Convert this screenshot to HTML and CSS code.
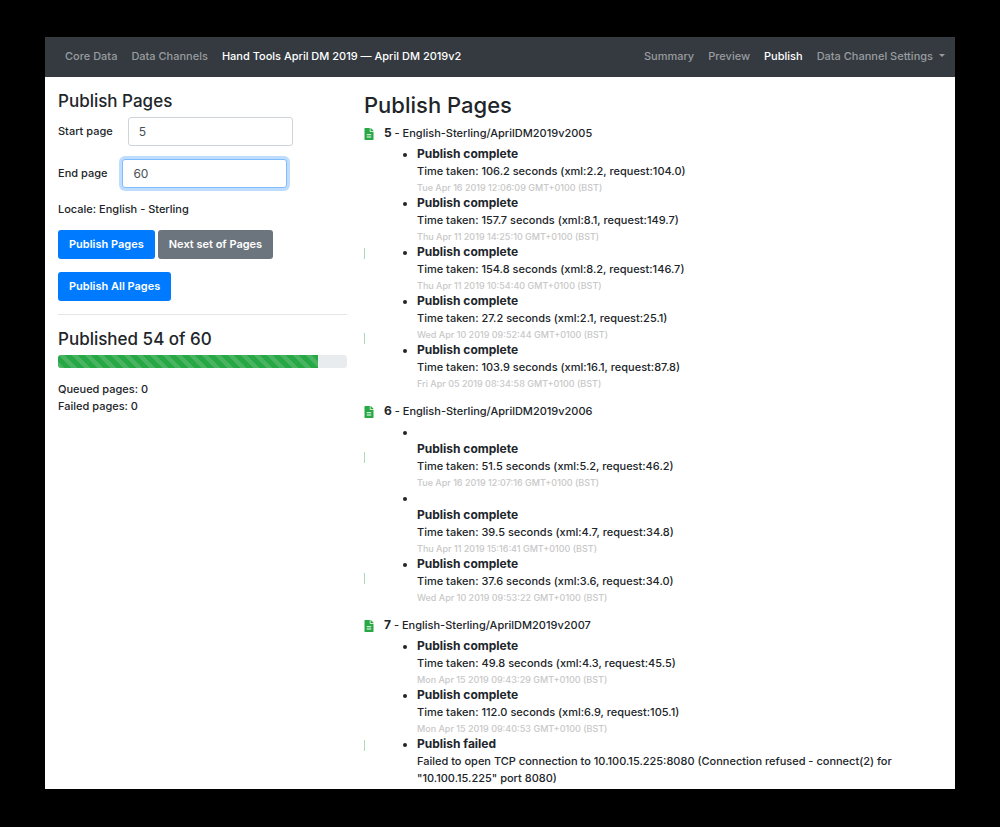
FILE: index.html
```html
<!DOCTYPE html>
<html lang="en">
<head>
  <meta charset="UTF-8" />
  <meta name="viewport" content="width=device-width, initial-scale=1" />
  <title>Publish Pages</title>
  <link rel="stylesheet" href="styles.css">
</head>
<body>
  <svg class="defs" width="0" height="0" aria-hidden="true">
    <symbol id="file" viewBox="0 0 384 512">
      <path fill="currentColor" d="M224 136V0H24C11 0 0 11 0 24v464c0 13 11 24 24 24h336c13 0 24-11 24-24V160H248c-13 0-24-11-24-24zm64 264H96v-40h192v40zm0-96H96v-40h192v40zM384 122v6H256V0h6c6 0 12 3 17 7l98 98c4 5 7 11 7 17z" />
    </symbol>
  </svg>

  <div class="app">
    <nav class="navbar">
      <a href="#">Core Data</a>
      <a href="#">Data Channels</a>
      <a href="#" class="active">Hand Tools April DM 2019 — April DM 2019v2</a>
      <div class="nav-right">
        <a href="#">Summary</a>
        <a href="#">Preview</a>
        <a href="#" class="active">Publish</a>
        <a href="#" class="dropdown">Data Channel Settings</a>
      </div>
    </nav>

    <main class="columns">
      <section class="sidebar">
        <h2>Publish Pages</h2>
        <form>
          <div class="field">
            <label for="start">Start page</label>
            <input type="text" id="start" value="5" />
          </div>
          <div class="field">
            <label for="end">End page</label>
            <input type="text" id="end" class="focused" value="60" />
          </div>
          <p class="locale">Locale: English - Sterling</p>
          <div class="buttons">
            <button type="button" class="btn">Publish Pages</button>
            <button type="button" class="btn secondary">Next set of Pages</button>
          </div>
          <div class="buttons">
            <button type="button" class="btn">Publish All Pages</button>
          </div>
        </form>
        <hr />
        <h2>Published 54 of 60</h2>
        <div class="progress"><div class="bar" style="width: 90%"></div></div>
        <div>Queued pages: 0</div>
        <div>Failed pages: 0</div>
      </section>

      <section class="log">
        <h1>Publish Pages</h1>

        <div class="page">
          <div class="page-title"><svg class="icon"><use href="#file" /></svg><span><b>5</b> - English-Sterling/AprilDM2019v2005</span></div>
          <ul>
            <li><b>Publish complete</b><div>Time taken: 106.2 seconds (xml:2.2, request:104.0)</div><small>Tue Apr 16 2019 12:06:09 GMT+0100 (BST)</small></li>
            <li><b>Publish complete</b><div>Time taken: 157.7 seconds (xml:8.1, request:149.7)</div><small>Thu Apr 11 2019 14:25:10 GMT+0100 (BST)</small></li>
            <li class="tick"><b>Publish complete</b><div>Time taken: 154.8 seconds (xml:8.2, request:146.7)</div><small>Thu Apr 11 2019 10:54:40 GMT+0100 (BST)</small></li>
            <li class="tick tick-low"><b>Publish complete</b><div>Time taken: 27.2 seconds (xml:2.1, request:25.1)</div><small>Wed Apr 10 2019 09:52:44 GMT+0100 (BST)</small></li>
            <li><b>Publish complete</b><div>Time taken: 103.9 seconds (xml:16.1, request:87.8)</div><small>Fri Apr 05 2019 08:34:58 GMT+0100 (BST)</small></li>
          </ul>
        </div>

        <div class="page">
          <div class="page-title"><svg class="icon"><use href="#file" /></svg><span><b>6</b> - English-Sterling/AprilDM2019v2006</span></div>
          <ul>
            <li class="tick tick-mid"><br /><b>Publish complete</b><div>Time taken: 51.5 seconds (xml:5.2, request:46.2)</div><small>Tue Apr 16 2019 12:07:16 GMT+0100 (BST)</small></li>
            <li><br /><b>Publish complete</b><div>Time taken: 39.5 seconds (xml:4.7, request:34.8)</div><small>Thu Apr 11 2019 15:16:41 GMT+0100 (BST)</small></li>
            <li class="tick tick-high"><b>Publish complete</b><div>Time taken: 37.6 seconds (xml:3.6, request:34.0)</div><small>Wed Apr 10 2019 09:53:22 GMT+0100 (BST)</small></li>
          </ul>
        </div>

        <div class="page">
          <div class="page-title"><svg class="icon"><use href="#file" /></svg><span><b>7</b> - English-Sterling/AprilDM2019v2007</span></div>
          <ul>
            <li><b>Publish complete</b><div>Time taken: 49.8 seconds (xml:4.3, request:45.5)</div><small>Mon Apr 15 2019 09:43:29 GMT+0100 (BST)</small></li>
            <li><b>Publish complete</b><div>Time taken: 112.0 seconds (xml:6.9, request:105.1)</div><small>Mon Apr 15 2019 09:40:53 GMT+0100 (BST)</small></li>
            <li class="tick"><b>Publish failed</b><div>Failed to open TCP connection to 10.100.15.225:8080 (Connection refused - connect(2) for "10.100.15.225" port 8080)</div></li>
          </ul>
        </div>
      </section>
    </main>
  </div>
</body>
</html>
```

FILE: styles.css
```css
* {
  box-sizing: border-box;
}

body {
  margin: 0;
  padding: 37px 45px 38px;
  background: #000;
  color: #212529;
  font-family: Inter, "Liberation Sans", sans-serif;
  font-size: 11px;
  font-weight: 500;
  line-height: 17px;
}

.defs {
  position: absolute;
}

.app {
  background: #fff;
}

.navbar {
  display: flex;
  align-items: center;
  gap: 14px;
  height: 40px;
  padding: 0 10px 2px 20px;
  background: #343a40;
}

.navbar a {
  color: #999c9f;
  text-decoration: none;
}

.navbar a.active {
  color: #fff;
}

.nav-right {
  display: flex;
  gap: 14px;
  margin-left: auto;
}

.dropdown::after {
  content: "";
  display: inline-block;
  margin-left: 6px;
  vertical-align: 3px;
  border: 3px solid transparent;
  border-top-color: currentColor;
  border-bottom: 0;
}

.columns {
  display: grid;
  grid-template-columns: 1fr 2fr;
  gap: 17px;
  padding: 14px 13px 2px;
}

h1,
h2 {
  margin: 0;
  font-weight: 500;
}

h1 {
  font-size: 22px;
  line-height: 28px;
  margin-bottom: 6px;
}

h2 {
  font-size: 17px;
  line-height: 20px;
  margin-bottom: 6px;
}

.field {
  display: flex;
  align-items: center;
  gap: 15px;
  margin-bottom: 13px;
}

.field input {
  width: 165px;
  height: 29px;
  padding: 0 10px;
  border: 1px solid #ced4da;
  border-radius: 3px;
  color: #495057;
  font: inherit;
  font-size: 12px;
  font-weight: 400;
}

.field input.focused,
.field input:focus {
  border-color: #80bdff;
  outline: 0;
  box-shadow: 0 0 0 3px #bfdeff;
}

.locale {
  margin: 0 0 12px;
}

.buttons {
  display: flex;
  gap: 3px;
  margin-bottom: 13px;
}

.btn {
  height: 29px;
  padding: 0 11px;
  border: 0;
  border-radius: 3px;
  background: #007bff;
  color: #fff;
  font: inherit;
  font-weight: 600;
}

.btn.secondary {
  background: #6c757d;
}

hr {
  margin: 0 0 14px;
  border: 0;
  border-top: 1px solid #e5e5e5;
}

.progress {
  height: 13px;
  margin-bottom: 13px;
  border-radius: 3px;
  background: #e9ecef;
  overflow: hidden;
}

.bar {
  height: 100%;
  background: #28a745 linear-gradient(45deg, rgba(255, 255, 255, .15) 25%, transparent 25%, transparent 50%, rgba(255, 255, 255, .15) 50%, rgba(255, 255, 255, .15) 75%, transparent 75%);
  background-size: 13px 13px;
}

.page {
  margin-bottom: 12px;
}

.page:last-child {
  margin-bottom: 0;
}

.page-title {
  display: flex;
  align-items: center;
  gap: 10px;
  margin-bottom: 4px;
}

.icon {
  width: 10px;
  height: 12px;
  color: #28a745;
}

ul {
  margin: 0;
  padding-left: 53px;
}

li {
  position: relative;
}

b {
  font-size: 12px;
  font-weight: 700;
  line-height: 16px;
}

small {
  display: block;
  color: #c8c8c8;
  font-size: 9px;
  line-height: 15px;
}

.tick::before {
  content: "";
  position: absolute;
  left: -53px;
  top: 4px;
  width: 1px;
  height: 11px;
  background: #a9dcb5;
}

.tick-high::before {
  top: 17px;
}

.tick-mid::before {
  top: 28px;
}

.tick-low::before {
  top: 40px;
}
```
